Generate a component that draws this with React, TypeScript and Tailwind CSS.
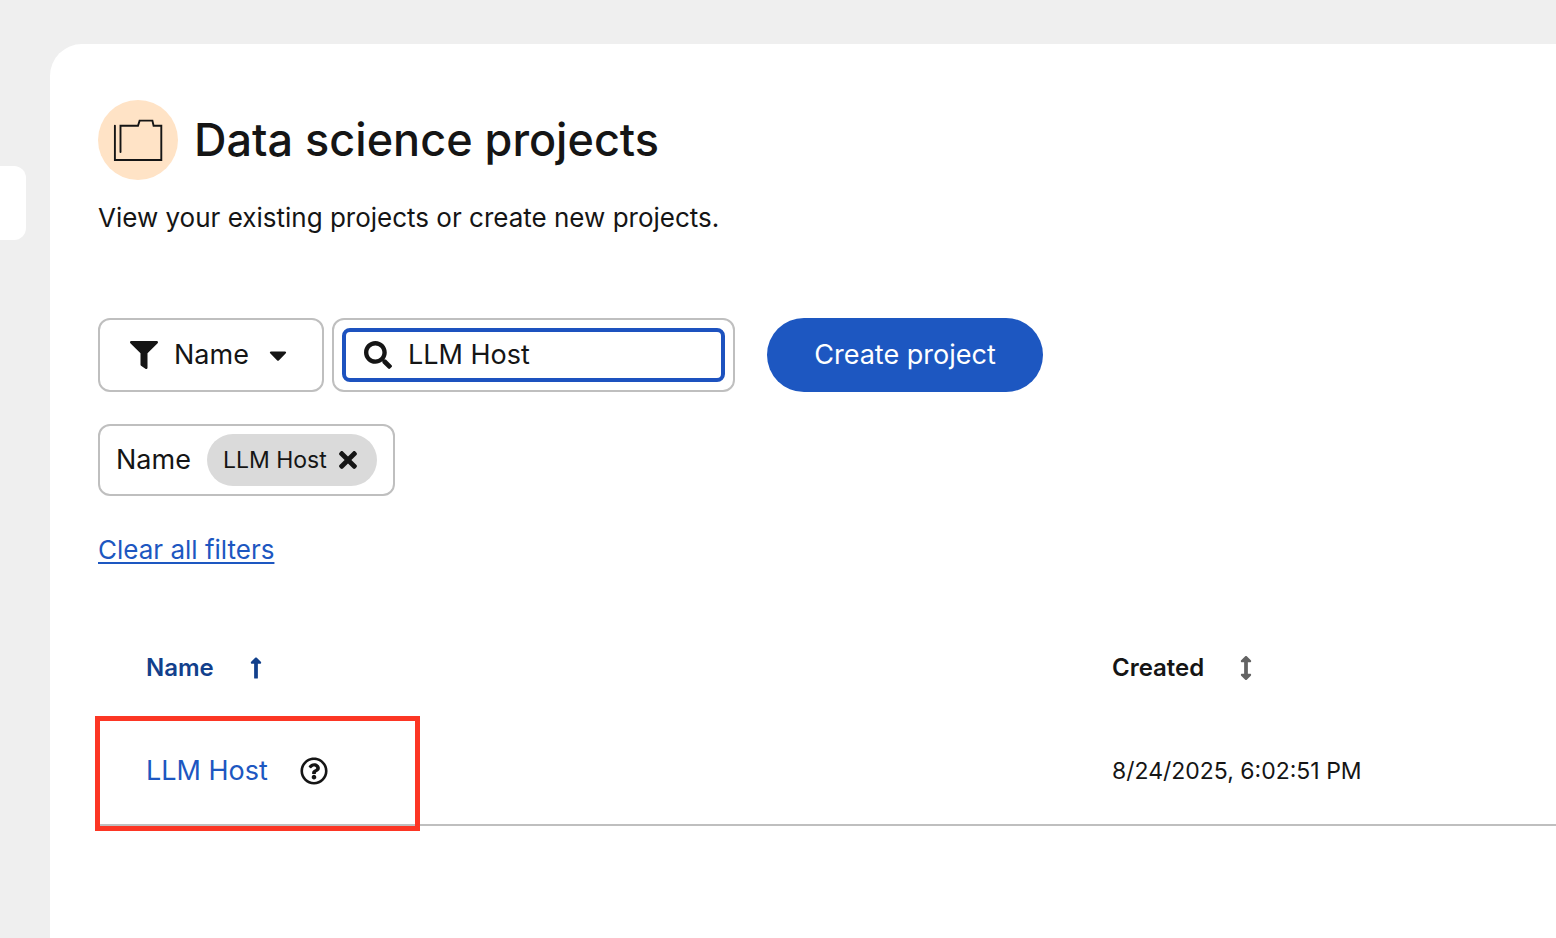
import React from 'react';
import {
  FaArrowsAltV,
  FaCaretDown,
  FaFilter,
  FaLongArrowAltUp,
  FaRegQuestionCircle,
  FaSearch,
  FaTimes,
} from 'react-icons/fa';

function ProjectIcon() {
  return (
    <span className="flex size-20 shrink-0 items-center justify-center rounded-full bg-[#ffe3c6]">
      <svg className="size-[50px]" viewBox="0 0 50 50" fill="none" stroke="#151515" strokeWidth="1.9" strokeLinecap="round" aria-hidden="true">
        <path d="M1.9 10.6V45H48.3V10.8H40.6L39.4 5.6H26.6L25 10.8H7.5V37" />
      </svg>
    </span>
  );
}

function PageHeader() {
  return (
    <header>
      <div className="flex items-center gap-4">
        <ProjectIcon />
        <h1 className="text-[45px] leading-[60px] font-medium">Data science projects</h1>
      </div>
      <p className="mt-4 text-[26px] leading-[44px]">View your existing projects or create new projects.</p>
    </header>
  );
}

function Toolbar() {
  return (
    <div className="mt-[78px] flex items-center">
      <label className="flex h-[74px] w-[226px] items-center rounded-xl border-2 border-[#bfbfbf] pl-[30px]">
        <FaFilter className="size-7" aria-hidden="true" />
        <select aria-label="Filter by" className="ml-4 w-20 appearance-none bg-transparent text-[27px] leading-[42px] outline-none">
          <option>Name</option>
        </select>
        <FaCaretDown className="ml-[10px] size-7" aria-hidden="true" />
      </label>
      <div className="ml-2 h-[74px] w-[403px] rounded-xl border-2 border-[#bfbfbf] p-2">
        <label className="flex h-full items-center rounded-lg border-4 border-[#1d52bf] pl-[18px]">
          <FaSearch className="size-7 shrink-0" aria-hidden="true" />
          <input
            aria-label="Filter by name"
            defaultValue="LLM Host"
            className="ml-4 w-full min-w-0 bg-transparent text-[27px] leading-[42px] outline-none"
          />
        </label>
      </div>
      <button type="button" className="ml-8 h-[74px] w-[276px] rounded-full bg-[#1d57c1] text-[27px] leading-[42px] text-white">
        Create project
      </button>
    </div>
  );
}

function ActiveFilters() {
  return (
    <div className="mt-8 flex flex-col items-start gap-8">
      <div className="flex h-[72px] items-center gap-4 rounded-xl border-2 border-[#bfbfbf] px-4">
        <span className="text-[27px] leading-[42px]">Name</span>
        <span className="flex h-[52px] items-center gap-2 rounded-full bg-[#dadada] px-4 text-[23px]">
          LLM Host
          <button type="button" aria-label="Remove LLM Host filter" className="flex">
            <FaTimes className="size-[26px]" />
          </button>
        </span>
      </div>
      <a href="#clear" className="text-[26px] leading-[44px] text-[#1d57c1] underline decoration-2 underline-offset-3">
        Clear all filters
      </a>
    </div>
  );
}

function ProjectsTable() {
  return (
    <table className="mt-[46px] w-full table-fixed border-collapse text-left">
      <thead>
        <tr className="h-[99px] text-[24px] leading-9">
          <th scope="col" className="w-[67.9%] pl-12 font-semibold text-[#12408c]">
            <button type="button" className="flex items-center gap-[30px]">
              Name
              <FaLongArrowAltUp className="size-6" aria-hidden="true" />
            </button>
          </th>
          <th scope="col" className="pl-6 font-semibold">
            <button type="button" className="flex items-center gap-[30px]">
              Created
              <FaArrowsAltV className="size-6 text-[#636363]" aria-hidden="true" />
            </button>
          </th>
        </tr>
      </thead>
      <tbody>
        <tr className="h-[108px] border-b-2 border-[#bfbfbf]">
          <td className="relative pl-12">
            <div className="flex items-center gap-8">
              <a href="#llm-host" className="text-[27px] leading-[42px] text-[#1d57c1]">LLM Host</a>
              <button type="button" aria-label="More info" className="flex">
                <FaRegQuestionCircle className="size-7" />
              </button>
            </div>
            <div className="pointer-events-none absolute -top-px -left-[3px] h-[115px] w-[325px] border-5 border-[#fc3624]" />
          </td>
          <td className="pl-6 text-[23px] leading-9">8/24/2025, 6:02:51 PM</td>
        </tr>
      </tbody>
    </table>
  );
}

export default function App() {
  return (
    <div className="flex min-h-screen overflow-hidden bg-[#efefef] font-['Inter',sans-serif] text-[#151515]">
      <nav aria-label="Main" className="w-[50px] shrink-0 pt-[166px]">
        <div className="h-[74px] w-[26px] rounded-r-xl bg-white" />
      </nav>
      <main className="mt-11 min-w-0 flex-1 rounded-tl-[32px] bg-white pt-14 pl-12">
        <PageHeader />
        <Toolbar />
        <ActiveFilters />
        <ProjectsTable />
      </main>
    </div>
  );
}
